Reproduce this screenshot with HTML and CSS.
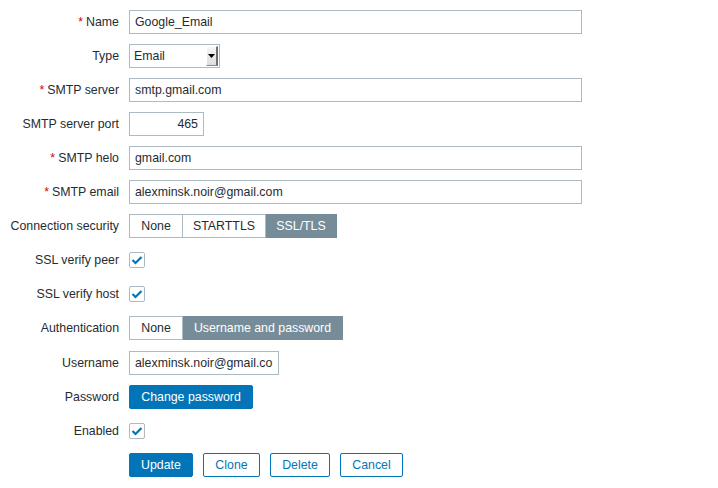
FILE: index.html
```html
<!DOCTYPE html>
<html>
<head>
<meta charset="utf-8">
<link rel="stylesheet" href="styles.css">
</head>
<body>
<form class="form">
  <label class="lbl"><span class="req">*</span> Name</label>
  <div class="field"><input class="txt w-wide" value="Google_Email"></div>

  <label class="lbl">Type</label>
  <div class="field">
    <div class="select"><span class="sel-val">Email</span><span class="sel-btn"><svg width="7" height="4" viewBox="0 0 7 4"><path d="M0 0h7L3.5 4z" fill="#000"/></svg></span></div>
  </div>

  <label class="lbl"><span class="req">*</span> SMTP server</label>
  <div class="field"><input class="txt w-wide" value="smtp.gmail.com"></div>

  <label class="lbl">SMTP server port</label>
  <div class="field"><input class="txt w-port" value="465"></div>

  <label class="lbl"><span class="req">*</span> SMTP helo</label>
  <div class="field"><input class="txt w-wide" value="gmail.com"></div>

  <label class="lbl"><span class="req">*</span> SMTP email</label>
  <div class="field"><input class="txt w-wide" value="alexminsk.noir@gmail.com"></div>

  <label class="lbl">Connection security</label>
  <div class="field">
    <div class="seg"><span class="seg-item s-none">None</span><span class="seg-item s-start">STARTTLS</span><span class="seg-item on s-ssl">SSL/TLS</span></div>
  </div>

  <label class="lbl">SSL verify peer</label>
  <div class="field"><span class="chk"><svg width="12" height="10" viewBox="0 0 12 10"><path d="M1.5 5l3 3L10.5 2" fill="none" stroke="#0275b8" stroke-width="2.2"/></svg></span></div>

  <label class="lbl">SSL verify host</label>
  <div class="field"><span class="chk"><svg width="12" height="10" viewBox="0 0 12 10"><path d="M1.5 5l3 3L10.5 2" fill="none" stroke="#0275b8" stroke-width="2.2"/></svg></span></div>

  <label class="lbl">Authentication</label>
  <div class="field">
    <div class="seg"><span class="seg-item s-none">None</span><span class="seg-item on s-user">Username and password</span></div>
  </div>

  <label class="lbl lbl-low">Username</label>
  <div class="field field-low"><input class="txt w-user" value="alexminsk.noir@gmail.com"></div>

  <label class="lbl">Password</label>
  <div class="field"><button type="button" class="btn primary b-pass">Change password</button></div>

  <label class="lbl">Enabled</label>
  <div class="field"><span class="chk"><svg width="12" height="10" viewBox="0 0 12 10"><path d="M1.5 5l3 3L10.5 2" fill="none" stroke="#0275b8" stroke-width="2.2"/></svg></span></div>

  <span class="lbl"></span>
  <div class="field actions">
    <button type="button" class="btn primary b-update">Update</button>
    <button type="button" class="btn alt b-clone">Clone</button>
    <button type="button" class="btn alt b-delete">Delete</button>
    <button type="button" class="btn alt b-cancel">Cancel</button>
  </div>
</form>
</body>
</html>
```

FILE: styles.css
```css
html, body {
  margin: 0;
  padding: 0;
  background: #fff;
  font-family: Arial, "Liberation Sans", sans-serif;
  font-size: 12.35px;
  color: #1f2c33;
}

.form {
  display: grid;
  grid-template-columns: 119px 1fr;
  grid-template-rows: repeat(10, 24px) 25px;
  grid-auto-rows: 24px;
  column-gap: 10px;
  row-gap: 10px;
  padding-top: 10px;
}

.lbl {
  display: flex;
  align-items: center;
  justify-content: flex-end;
  white-space: nowrap;
}

.lbl-low { padding-top: 1px; }

.req {
  color: #d40000;
  margin-right: 3px;
}

.field {
  display: flex;
  align-items: center;
}

.field-low { align-items: flex-end; }

.txt {
  box-sizing: border-box;
  height: 24px;
  border: 1px solid #acbbc2;
  background: #fff;
  padding: 0 5px;
  font: inherit;
  color: #1f2c33;
  outline: none;
  margin: 0;
}

.w-wide { width: 453px; }
.w-port { width: 75px; text-align: right; }
.w-user { width: 150px; }

.select {
  box-sizing: border-box;
  width: 91px;
  height: 24px;
  border: 1px solid #acbbc2;
  display: flex;
  align-items: center;
  justify-content: space-between;
  padding-left: 4px;
}

.sel-btn {
  width: 12px;
  height: 20px;
  margin-right: 1px;
  background: linear-gradient(#f6f6f6, #dedede);
  border-right: 2px solid #707070;
  border-bottom: 1px solid #8a8a8a;
  border-left: 1px solid #fff;
  border-top: 1px solid #fff;
  box-sizing: border-box;
  display: flex;
  align-items: center;
  justify-content: center;
}

.seg {
  display: flex;
  height: 24px;
}

.seg-item {
  box-sizing: border-box;
  height: 24px;
  display: flex;
  align-items: center;
  justify-content: center;
  border: 1px solid #acbbc2;
  border-left: none;
  background: #fff;
  color: #1f2c33;
}

.seg-item:first-child { border-left: 1px solid #acbbc2; }
.seg-item.on {
  background: #768d99;
  border-color: #768d99;
  color: #fff;
}

.s-none { width: 54px; }
.s-start { width: 83px; }
.s-ssl { width: 71px; }
.s-user { width: 160px; }

.chk {
  box-sizing: border-box;
  width: 16px;
  height: 16px;
  border: 1px solid #acbbc2;
  border-radius: 2px;
  display: flex;
  align-items: center;
  justify-content: center;
  background: #fff;
}

.btn {
  box-sizing: border-box;
  height: 24px;
  font: inherit;
  border-radius: 2px;
  margin: 0;
  padding: 0;
  cursor: pointer;
}

.btn.primary {
  background: #0275b8;
  border: 1px solid #0275b8;
  color: #fff;
}

.btn.alt {
  background: #fff;
  border: 1px solid #0275b8;
  color: #0275b8;
}

.actions { gap: 10px; }
.b-pass { width: 124px; }
.b-update { width: 64px; }
.b-clone { width: 57px; }
.b-delete { width: 60px; }
.b-cancel { width: 63px; }
```
